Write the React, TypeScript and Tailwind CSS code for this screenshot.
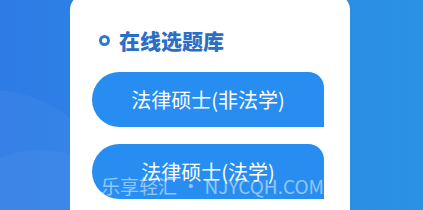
import React from 'react';

const options = ['法律硕士(非法学)', '法律硕士(法学)'];

export default function App() {
  return (
    <div
      className="relative w-[423px] h-[210px] overflow-hidden bg-gradient-to-r from-[#2e7be6] to-[#2a92e2]"
      style={{ fontFamily: '"Noto Sans CJK SC", "Noto Sans", sans-serif' }}
    >
      {/* faint background arcs */}
      <div className="absolute left-[-140px] top-[90px] w-[260px] h-[260px] rounded-full bg-white/[0.04]" />
      <div className="absolute left-[-60px] top-[150px] w-[200px] h-[200px] rounded-full bg-white/[0.04]" />

      <div className="relative flex justify-start pl-[70px]">
        <div className="w-[280px] h-[230px] mt-[-6px] bg-white rounded-t-[16px] pt-[33px] pl-[22px] pr-[26px]">
          <div className="flex items-center gap-[9px] pl-[7px]">
            <span className="w-[11px] h-[11px] rounded-full border-[3.5px] border-[#2c78d2] bg-white" />
            <span className="text-[21px] leading-[26px] font-black text-[#2a6fc6]">在线选题库</span>
          </div>
          <div className="flex flex-col gap-[17px] mt-[19px]">
            {options.map((label) => (
              <div
                key={label}
                className="h-[55px] w-[232px] flex items-center justify-center bg-[#278df1] rounded-l-[28px] rounded-tr-[16px] text-white text-[20px] leading-none"
              >
                {label}
              </div>
            ))}
          </div>
        </div>
      </div>

      {/* watermark */}
      <div className="absolute left-[101px] top-[175px] text-[19px] leading-[22px] text-white/50 whitespace-nowrap">
        乐享轻汇 • NJYCQH.COM
      </div>
    </div>
  );
}
